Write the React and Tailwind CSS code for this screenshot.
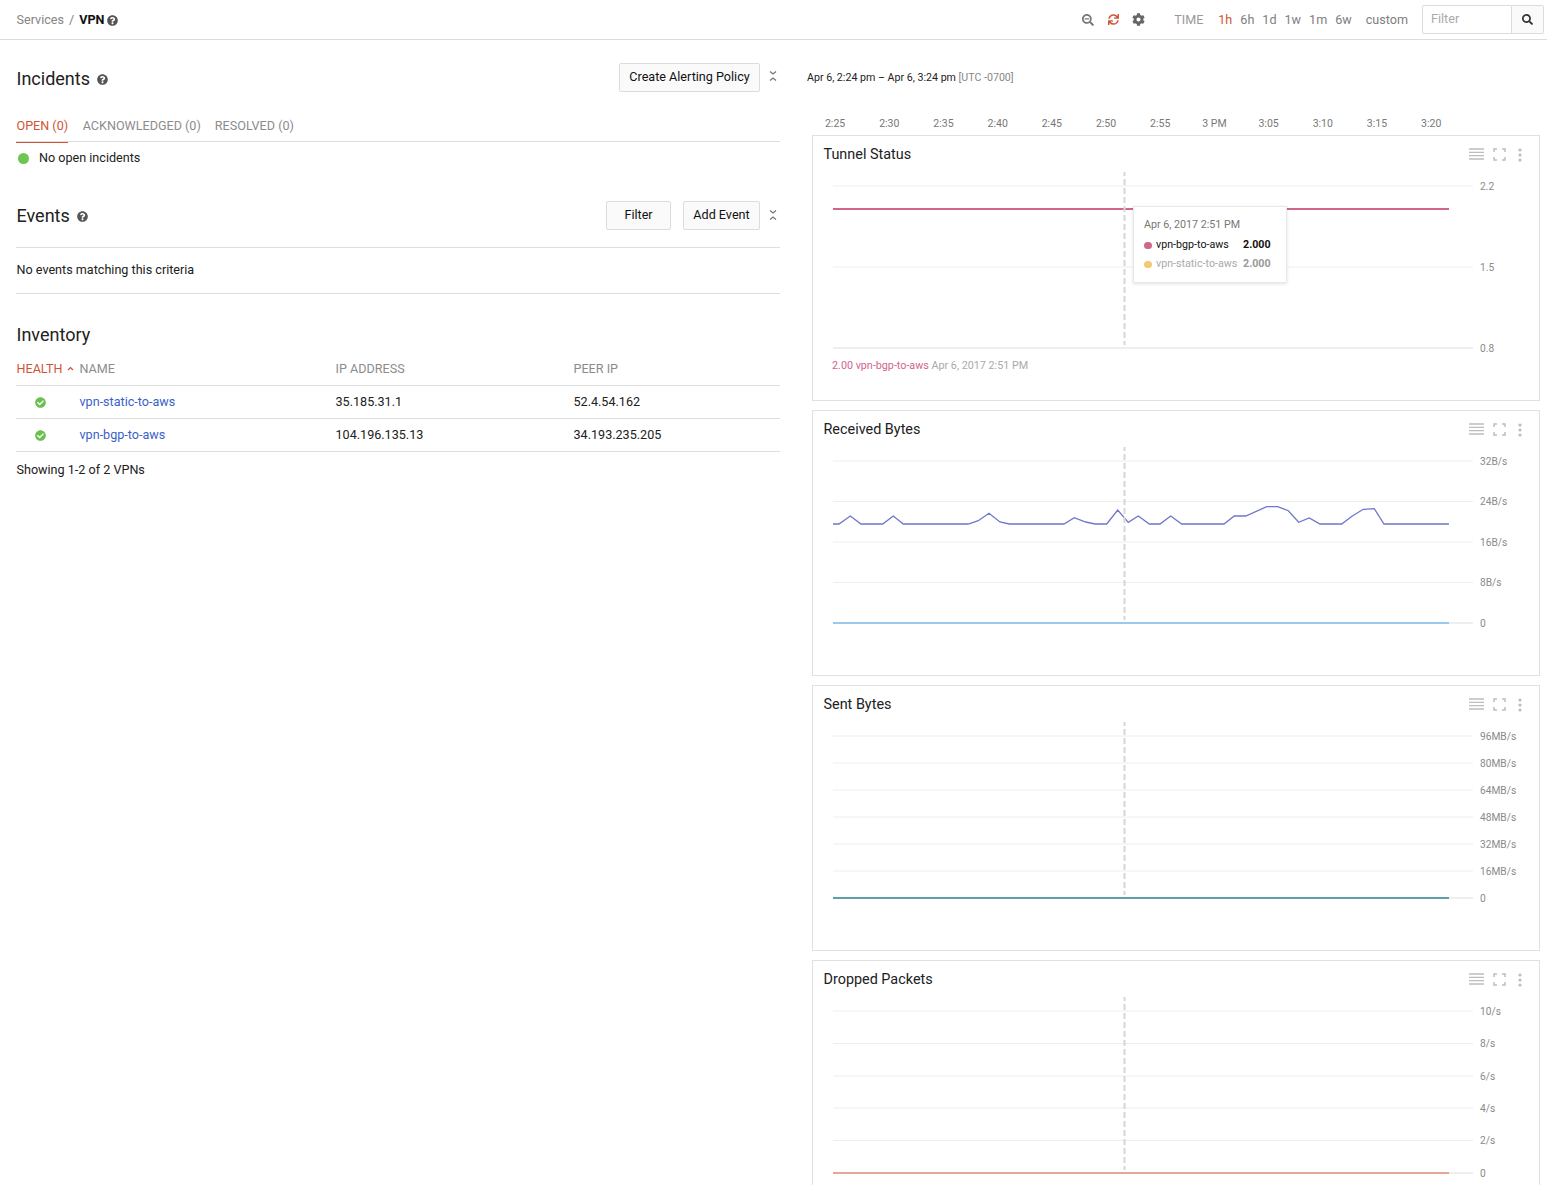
import { FaQuestionCircle, FaSearchMinus, FaSync, FaCog, FaSearch, FaCheckCircle } from 'react-icons/fa';

const TIMES = ['2:25', '2:30', '2:35', '2:40', '2:45', '2:50', '2:55', '3 PM', '3:05', '3:10', '3:15', '3:20'];
const RANGES = [
  { label: '1h', ml: 'ml-[15px]', active: true },
  { label: '6h', ml: 'ml-[8px]' },
  { label: '1d', ml: 'ml-[8px]' },
  { label: '1w', ml: 'ml-[8px]' },
  { label: '1m', ml: 'ml-[8px]' },
  { label: '6w', ml: 'ml-[8px]' },
  { label: 'custom', ml: 'ml-[14px]' },
];

const RECEIVED = '833,524 839,524 850.3,516 861,524 882.7,524 893.3,516 903.3,524 968.3,524 978.3,520.7 989,513.3 1000,522 1009.3,524 1064,524 1074.3,517.7 1085.7,522 1095,524 1106.7,524 1117.7,510 1128.3,522.3 1138.3,516 1149.3,524 1160,524 1170.7,516 1181.7,524 1224,524 1234.3,516 1245.7,516 1266.7,506.7 1277.7,506.7 1288.3,510.7 1298.7,522.3 1309.3,518 1320,524 1341.7,524 1352.3,516 1363.3,509.3 1374.3,508.7 1384,524 1449,524';

const Help = ({ className = '' }) => <FaQuestionCircle size={11} className={`text-[#555] ${className}`} />;

const Collapse = () => (
  <svg width="8" height="12" viewBox="0 0 8 12" className="mb-[2px] ml-[9px] mr-[3px]">
    <path d="M1 1.5 L4 4 L7 1.5" fill="none" stroke="#777" strokeWidth="1.3" />
    <path d="M1 10.5 L4 8 L7 10.5" fill="none" stroke="#777" strokeWidth="1.3" />
  </svg>
);

const Button = ({ children, className = '' }) => (
  <button className={`h-[29px] rounded-[2px] border border-[#dcdcdc] bg-[#fafafa] text-[12.6px] text-[#111] ${className}`}>{children}</button>
);

const ChartTools = () => (
  <div className="flex items-center text-[#bbb]">
    <svg width="15" height="13" viewBox="0 0 15 13">
      <path d="M0 1 H15 M0 4.3 H15 M0 7.6 H15 M0 11 H15" stroke="#bdbdbd" strokeWidth="1.3" />
    </svg>
    <svg width="13" height="13" viewBox="0 0 13 13" className="ml-[9px]">
      <path d="M1 4 V1 H4 M9 1 H12 V4 M12 9 V12 H9 M4 12 H1 V9" fill="none" stroke="#bdbdbd" strokeWidth="1.5" />
    </svg>
    <svg width="4" height="14" viewBox="0 0 4 14" className="ml-[12px] mr-[17px]">
      <circle cx="2" cy="2" r="1.6" fill="#bdbdbd" />
      <circle cx="2" cy="7" r="1.6" fill="#bdbdbd" />
      <circle cx="2" cy="12" r="1.6" fill="#bdbdbd" />
    </svg>
  </div>
);

const Chart = ({ title, top, ticks, children, overlay, className = 'h-[266px]' }) => (
  <section className={`relative shrink-0 overflow-hidden border border-[#e0e0e0] bg-white ${className}`}>
    <div className="flex h-[36px] items-center justify-between pl-[10.5px] pt-[1px]">
      <h3 className="text-[14.4px] font-normal text-[#212121]">{title}</h3>
      <ChartTools />
    </div>
    <svg width="726" height="228" viewBox={`813 ${top + 37} 726 228`} className="block">
      {ticks.map(([y, label]) => (
        <g key={label}>
          <line x1="833" x2="1473" y1={y} y2={y} stroke={y === ticks[ticks.length - 1][0] ? '#dedede' : '#eeeeee'} strokeWidth="1" />
          <text x="1480" y={y + 3.5} fontSize="10.2" fill="#8a8a8a">{label}</text>
        </g>
      ))}
      {children}
      <line x1="1124.5" x2="1124.5" y1={top + 35} y2={top + 210} stroke="#d6d6d6" strokeWidth="2" strokeDasharray="6 3" />
    </svg>
    {overlay}
  </section>
);

const Tooltip = () => (
  <div className="absolute left-[320px] top-[70px] h-[77px] w-[154px] border border-[#e8e8e8] bg-white pl-[10px] pt-[11px] text-[10.7px] shadow-[0_1px_3px_rgba(0,0,0,0.12)]">
    <div className="leading-[14px] text-[#777]">Apr 6, 2017 2:51 PM</div>
    <div className="mt-[6px] flex h-[14px] items-center text-[#111]">
      <span className="h-[7px] w-[8px] rounded-full bg-[#d0668c]" />
      <span className="ml-[4px] w-[87px]">vpn-bgp-to-aws</span>
      <span className="font-bold">2.000</span>
    </div>
    <div className="mt-[5px] flex h-[14px] items-center text-[#aaa]">
      <span className="h-[7px] w-[8px] rounded-full bg-[#f4c877]" />
      <span className="ml-[4px] w-[87px] whitespace-nowrap">vpn-static-to-aws</span>
      <span className="font-bold text-[#999]">2.000</span>
    </div>
  </div>
);

const Vpn = ({ name, ip, peer }) => (
  <div className="grid h-[33px] grid-cols-[63.5px_256px_238px_1fr] items-center border-b border-[#dedede] text-[12.6px] text-[#212121]">
    <span className="pl-[19px]"><FaCheckCircle size={11} className="text-[#6cc04f]" /></span>
    <a className="text-[#3b5fc8]">{name}</a>
    <span>{ip}</span>
    <span>{peer}</span>
  </div>
);

export default function App() {
  return (
    <div className="h-[1185px] w-[1547px] overflow-hidden bg-white font-['Roboto',sans-serif] text-[#212121]">
      <header className="flex h-[40px] items-center border-b border-[#dcdcdc] pl-[16.5px]">
        <span className="pt-[1px] text-[12.6px] text-[#858585]">Services</span>
        <span className="ml-[5px] pt-[1px] text-[12.6px] text-[#858585]">/</span>
        <span className="ml-[5px] pt-[1px] text-[12.6px] font-bold text-[#111]">VPN</span>
        <Help className="ml-[3px] mt-[1px]" />
        <div className="ml-auto flex items-center">
          <FaSearchMinus size={12} className="text-[#777]" />
          <FaSync size={11} className="ml-[14px] text-[#cf5436]" />
          <FaCog size={13} className="ml-[13px] text-[#666]" />
          <span className="ml-[29px] pt-[2px] text-[12.6px] text-[#9a9a9a]">TIME</span>
          {RANGES.map((r) => (
            <span key={r.label} className={`${r.ml} pt-[2px] text-[12.6px] ${r.active ? 'text-[#cf5436]' : 'text-[#808080]'}`}>{r.label}</span>
          ))}
          <div className="ml-[14px] mb-[1px] flex h-[29px] w-[122px] overflow-hidden rounded-[2px] border border-[#dcdcdc]">
            <span className="flex-1 pl-[8px] pt-[6px] text-[12.6px] leading-[14px] text-[#aaa]">Filter</span>
            <span className="flex w-[32px] items-center justify-center border-l border-[#dcdcdc] bg-[#fafafa]"><FaSearch size={11} className="text-[#333]" /></span>
          </div>
          <div className="w-[3px]" />
        </div>
      </header>

      <main className="flex">
        <div className="w-[780px] shrink-0 pl-[16px]">
          <div className="flex h-[76px] items-center pt-[1px]">
            <h2 className="pl-[0.5px] text-[18px] font-normal leading-[24px] text-[#212121]">Incidents</h2>
            <Help className="ml-[7px] mt-[2px]" />
            <div className="ml-auto flex items-center pb-[3px]">
              <Button className="w-[141px]">Create Alerting Policy</Button>
              <Collapse />
            </div>
          </div>
          <nav className="flex h-[26px] items-start border-b border-[#dedede] pl-[0.5px] pt-[2px] text-[12.6px] leading-[16px] text-[#8c8c8c]">
            <span className="relative h-[24px] text-[#cf5436] after:absolute after:bottom-[-1px] after:left-[-1px] after:right-0 after:h-[1px] after:bg-[#cf5436]">OPEN (0)</span>
            <span className="ml-[14.5px]">ACKNOWLEDGED (0)</span>
            <span className="ml-[14px]">RESOLVED (0)</span>
          </nav>
          <div className="flex h-[32px] items-center pl-[2px] text-[12.6px] text-[#212121]">
            <span className="h-[11px] w-[11px] rounded-full bg-[#6cc650]" />
            <span className="ml-[10px]">No open incidents</span>
          </div>

          <div className="mt-[20px] flex h-[43px] items-center">
            <h2 className="pl-[0.5px] text-[18px] font-normal leading-[24px]">Events</h2>
            <Help className="ml-[7px] mt-[2px]" />
            <div className="ml-auto flex items-center">
              <Button className="w-[65px]">Filter</Button>
              <Button className="ml-[12px] w-[77px]">Add Event</Button>
              <Collapse />
            </div>
          </div>
          <div className="mt-[10px] flex h-[47px] items-center border-y border-[#dedede] pl-[0.5px] text-[12.6px]">No events matching this criteria</div>

          <h2 className="mt-[29px] pl-[0.5px] text-[18px] font-normal leading-[24px]">Inventory</h2>
          <div className="mt-[9px] grid h-[30px] grid-cols-[63.5px_256px_238px_1fr] items-center border-b border-[#dedede] pb-[3px] pl-[0.5px] text-[12.6px] text-[#8c8c8c]">
            <span className="flex items-center text-[#cf5436]">
              HEALTH
              <svg width="7" height="5" viewBox="0 0 7 5" className="ml-[5px]"><path d="M1 4 L3.5 1.5 L6 4" fill="none" stroke="#cf5436" strokeWidth="1.2" /></svg>
            </span>
            <span className="-ml-[0.5px]">NAME</span>
            <span className="-ml-[0.5px]">IP ADDRESS</span>
            <span className="-ml-[0.5px]">PEER IP</span>
          </div>
          <Vpn name="vpn-static-to-aws" ip="35.185.31.1" peer="52.4.54.162" />
          <Vpn name="vpn-bgp-to-aws" ip="104.196.135.13" peer="34.193.235.205" />
          <div className="mt-[10px] pl-[0.5px] text-[12.6px] leading-[16px]">Showing 1-2 of 2 VPNs</div>
        </div>

        <div className="ml-[27px] flex h-[1145px] w-[733px] flex-col overflow-hidden">
          <div className="mt-[31px] text-[10.65px] leading-[14px] text-[#212121]">
            Apr 6, 2:24 pm – Apr 6, 3:24 pm <span className="text-[#888]">[UTC -0700]</span>
          </div>
          <div className="mt-[31px] flex h-[15px] items-center pl-[1px] text-[10.5px] text-[#777]">
            {TIMES.map((t) => <span key={t} className="w-[54.2px] shrink-0 text-center">{t}</span>)}
          </div>
          <div className="ml-[5px] mt-[4px] flex w-[728px] flex-col gap-[9px]">
            <Chart title="Tunnel Status" top={135} ticks={[[186, '2.2'], [267, '1.5'], [348, '0.8']]} overlay={<Tooltip />}>
              <line x1="833" x2="1449" y1="209" y2="209" stroke="#d0668c" strokeWidth="2" />
              <text x="832" y="369" fontSize="10.75" fill="#d0668c">2.00 vpn-bgp-to-aws <tspan fill="#aaa">Apr 6, 2017 2:51 PM</tspan></text>
            </Chart>
            <Chart title="Received Bytes" top={410} ticks={[[461, '32B/s'], [501.5, '24B/s'], [542, '16B/s'], [582.5, '8B/s'], [623, '0']]}>
              <polyline points={RECEIVED} fill="none" stroke="#6f76cc" strokeWidth="1.3" />
              <line x1="833" x2="1449" y1="623" y2="623" stroke="#7dbcec" strokeWidth="1.5" />
            </Chart>
            <Chart title="Sent Bytes" top={685} ticks={[[736, '96MB/s'], [763, '80MB/s'], [790, '64MB/s'], [817, '48MB/s'], [844, '32MB/s'], [871, '16MB/s'], [898, '0']]}>
              <line x1="833" x2="1449" y1="898" y2="898" stroke="#5f9fa9" strokeWidth="2" />
            </Chart>
            <Chart title="Dropped Packets" top={960} ticks={[[1011, '10/s'], [1043.5, '8/s'], [1076, '6/s'], [1108, '4/s'], [1140.5, '2/s'], [1173, '0']]}>
              <line x1="833" x2="1449" y1="1173" y2="1173" stroke="#e08e78" strokeWidth="1.5" />
            </Chart>
          </div>
        </div>
      </main>
    </div>
  );
}
